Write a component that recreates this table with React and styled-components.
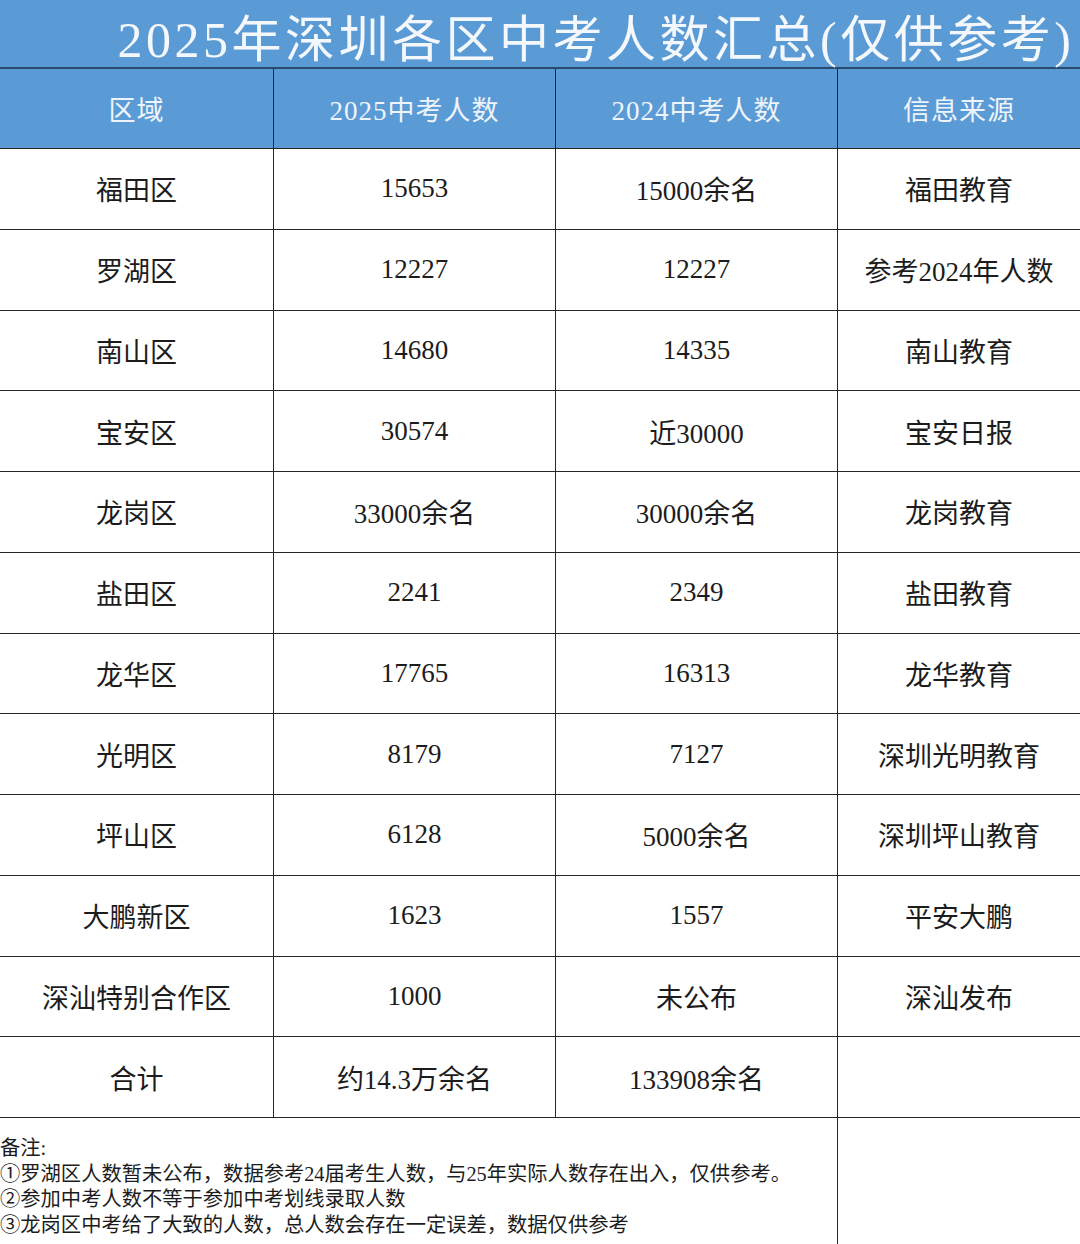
import React from "react";
import styled, { createGlobalStyle } from "styled-components";

const GlobalStyle = createGlobalStyle`
  html, body {
    margin: 0;
    padding: 0;
    background: #ffffff;
  }
  body {
    font-family: "Liberation Serif", "Noto Sans CJK SC", serif;
  }
`;

const Sheet = styled.div`
  width: 1080px;
  height: 1244px;
  overflow: hidden;
  display: grid;
  grid-template-columns: 274px 282px 282px 242px;
  grid-template-rows: 69px 80px repeat(12, 80.75px) 1fr;
  background: #ffffff;
`;

const Title = styled.div`
  grid-column: 1 / -1;
  box-sizing: border-box;
  display: flex;
  align-items: center;
  justify-content: center;
  padding: 2px 0 0 112px;
  background: #5b9bd5;
  border-bottom: 2px solid #274a6e;
  color: #f4f8fd;
  font-size: 50px;
  letter-spacing: 3.5px;
  white-space: nowrap;
`;

const Cell = styled.div`
  box-sizing: border-box;
  display: flex;
  align-items: center;
  justify-content: center;
  border-bottom: 1.5px solid #262626;
  border-right: ${(p) => (p.$last ? "none" : "1.5px solid #262626")};
  background: ${(p) => (p.$head ? "#5b9bd5" : "#ffffff")};
  color: ${(p) => (p.$head ? "#eef4fb" : "#1c1c1c")};
  font-size: 27px;
  letter-spacing: ${(p) => (p.$head ? "1px" : "0")};
  white-space: nowrap;
`;

const Notes = styled.div`
  grid-column: 1 / span 3;
  box-sizing: border-box;
  border-right: 1.5px solid #262626;
  padding: 18px 0 0 0;
  font-size: 20.3px;
  line-height: 25.6px;
  color: #1c1c1c;
`;

const NoteLine = styled.div`
  white-space: nowrap;
`;

const Empty = styled.div``;

const headers = ["区域", "2025中考人数", "2024中考人数", "信息来源"];

const rows = [
  ["福田区", "15653", "15000余名", "福田教育"],
  ["罗湖区", "12227", "12227", "参考2024年人数"],
  ["南山区", "14680", "14335", "南山教育"],
  ["宝安区", "30574", "近30000", "宝安日报"],
  ["龙岗区", "33000余名", "30000余名", "龙岗教育"],
  ["盐田区", "2241", "2349", "盐田教育"],
  ["龙华区", "17765", "16313", "龙华教育"],
  ["光明区", "8179", "7127", "深圳光明教育"],
  ["坪山区", "6128", "5000余名", "深圳坪山教育"],
  ["大鹏新区", "1623", "1557", "平安大鹏"],
  ["深汕特别合作区", "1000", "未公布", "深汕发布"],
  ["合计", "约14.3万余名", "133908余名", ""],
];

const notes = [
  "备注:",
  "①罗湖区人数暂未公布，数据参考24届考生人数，与25年实际人数存在出入，仅供参考。",
  "②参加中考人数不等于参加中考划线录取人数",
  "③龙岗区中考给了大致的人数，总人数会存在一定误差，数据仅供参考",
];

export default function App() {
  return (
    <>
      <GlobalStyle />
      <Sheet>
        <Title>2025年深圳各区中考人数汇总(仅供参考)</Title>
        {headers.map((h, i) => (
          <Cell key={h} $head $last={i === 3}>
            {h}
          </Cell>
        ))}
        {rows.map((row, r) =>
          row.map((v, i) => (
            <Cell key={r + "-" + i} $last={i === 3}>
              {v}
            </Cell>
          ))
        )}
        <Notes>
          {notes.map((n) => (
            <NoteLine key={n}>{n}</NoteLine>
          ))}
        </Notes>
        <Empty />
      </Sheet>
    </>
  );
}
